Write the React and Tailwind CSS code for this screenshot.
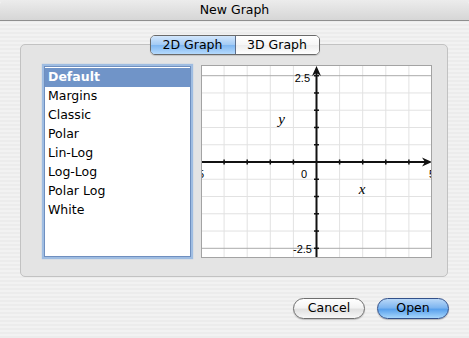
import React from 'react';

const styles = ['Default', 'Margins', 'Classic', 'Polar', 'Lin-Log', 'Log-Log', 'Polar Log', 'White'];

const GraphPreview = () => {
  const cols = [1, 2, 3, 4, 5, 6, 7, 8, 9].map((k) => k * 23.1);
  const rows = [-5, -4, -3, -2, -1, 0, 1, 2, 3, 4, 5].map((k) => 97 - 17.26 * k);
  const ax = 115.5;
  const ay = 97;

  return (
    <svg width="231" height="193" viewBox="0 0 231 193" className="block shrink-0 bg-white">
      {cols.map((x) => (
        <line key={'c' + x} x1={x} y1="0" x2={x} y2="193" stroke="#e2e2e2" strokeWidth="1" />
      ))}
      {rows.map((y, i) => (
        <line
          key={'r' + i}
          x1="0"
          y1={y}
          x2="231"
          y2={y}
          stroke={i === 0 || i === 10 ? '#ababab' : '#e2e2e2'}
          strokeWidth="1"
        />
      ))}

      {/* axes */}
      <line x1={ax} y1="193" x2={ax} y2="8" stroke="#111" strokeWidth="2" />
      <line x1="0" y1={ay} x2="224" y2={ay} stroke="#111" strokeWidth="2" />
      <polygon points={`${ax},1 ${ax - 4.5},11 ${ax},8 ${ax + 4.5},11`} fill="#111" />
      <polygon points={`231,${ay} 221,${ay - 4.5} 224,${ay} 221,${ay + 4.5}`} fill="#111" />

      {cols.filter((_, i) => i !== 4).map((x) => (
        <line key={'tx' + x} x1={x} y1={ay - 2.5} x2={x} y2={ay + 2.5} stroke="#111" strokeWidth="1.5" />
      ))}
      {rows.filter((_, i) => i !== 5).map((y, i) => (
        <line key={'ty' + i} x1={ax - 2.5} y1={y} x2={ax + 2.5} y2={y} stroke="#111" strokeWidth="1.5" />
      ))}

      <g fontFamily="'Liberation Sans', Arial, sans-serif" fontSize="11" fill="#000">
        <text x="109" y="17" textAnchor="end">2.5</text>
        <text x="111" y="188" textAnchor="end">-2.5</text>
        <text x="103" y="113" textAnchor="middle">0</text>
        <text x="0" y="113" textAnchor="middle">5</text>
        <text x="231" y="113" textAnchor="middle">5</text>
      </g>
      <g fontFamily="'Liberation Serif', 'Times New Roman', serif" fontStyle="italic" fontSize="15" fill="#000">
        <text x="80.5" y="59" textAnchor="middle">y</text>
        <text x="161" y="129" textAnchor="middle">x</text>
      </g>
      <rect x="0.5" y="0.5" width="230" height="192" fill="none" stroke="#a3a3a3" />
    </svg>
  );
};

const App = () => {
  return (
    <div
      className="w-[469px] h-[338px] overflow-hidden flex flex-col text-[12.5px] text-black bg-[repeating-linear-gradient(180deg,#ececec_0px,#ececec_2px,#f2f2f2_2px,#f2f2f2_4px)]"
      style={{ fontFamily: "'DejaVu Sans', 'Noto Sans', sans-serif" }}
    >
      {/* title bar */}
      <div className="h-[21px] shrink-0 flex items-center justify-center rounded-t-[5px] border-b border-[#8e8e8e] bg-[linear-gradient(180deg,#ececec,#d6d6d6)]">
        <span className="leading-none">New Graph</span>
      </div>

      <div className="flex flex-col pt-[14px]">
        {/* segmented tabs */}
        <div className="relative z-10 mx-auto flex h-[20px] w-[170px] overflow-hidden rounded-[5px] border border-[#6a6a6a] shadow-[0_1px_1px_rgba(0,0,0,0.15)]">
          <div className="flex w-[85px] items-center justify-center border-r border-[#5d6f8c] bg-[linear-gradient(180deg,#d3e7fc_0%,#a4cbf5_48%,#80b7f1_52%,#b5dafd_100%)]">
            2D Graph
          </div>
          <div className="flex flex-1 items-center justify-center bg-[linear-gradient(180deg,#ffffff_0%,#f6f6f6_48%,#ededed_52%,#ffffff_100%)]">
            3D Graph
          </div>
        </div>

        {/* group box */}
        <div className="-mt-[11px] ml-[20px] box-border flex h-[233px] w-[428px] items-start gap-[10px] rounded-[5px] border border-[#c2c2c2] bg-[#e4e4e4] pt-[20px] pl-[23px] pr-[15px]">
          <div className="mt-px h-[191px] w-[147px] shrink-0 border border-[#6f8fbf] bg-white pt-[0.5px] shadow-[0_0_1px_2px_#9fbde2]">
            {styles.map((s, i) => (
              <div
                key={s}
                className={
                  i === 0
                    ? 'flex h-[19px] items-center bg-[#7094c8] pl-[3px] font-bold text-white'
                    : 'flex h-[19px] items-center pl-[3px]'
                }
              >
                {s}
              </div>
            ))}
          </div>
          <GraphPreview />
        </div>

        {/* buttons */}
        <div className="mt-[21px] flex justify-end gap-[12px] pr-[20px]">
          <button className="flex h-[21px] w-[72px] items-center justify-center rounded-full border border-[#6e6e6e] bg-[linear-gradient(180deg,#ffffff_0%,#f3f3f3_45%,#e1e1e1_55%,#f7f7f7_100%)] shadow-[0_1px_1px_rgba(0,0,0,0.2)]">
            Cancel
          </button>
          <button className="flex h-[21px] w-[72px] items-center justify-center rounded-full border border-[#32508a] bg-[linear-gradient(180deg,#b9d8f8_0%,#7fb6f0_45%,#5aa1ec_55%,#a6d6fc_100%)] shadow-[0_1px_1px_rgba(0,0,0,0.25)]">
            Open
          </button>
        </div>
      </div>
    </div>
  );
};

export default App;
